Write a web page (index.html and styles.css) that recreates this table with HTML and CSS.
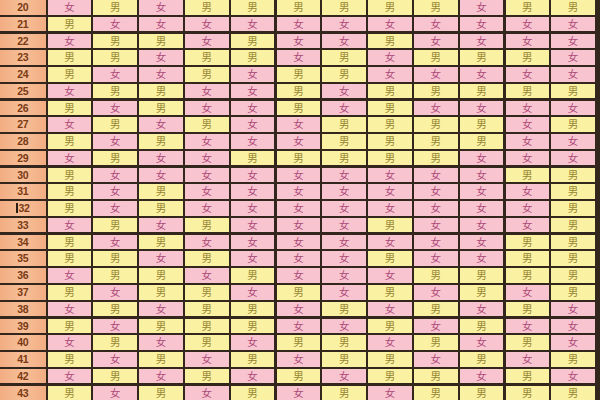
FILE: index.html
```html
<!DOCTYPE html>
<html lang="zh">
<head>
<meta charset="utf-8">
<title>表</title>
<link rel="stylesheet" href="styles.css">
</head>
<body>
<div class="sheet" id="sheet">
<div class="n">20</div><div class="g">女</div><div class="b">男</div><div class="g">女</div><div class="b">男</div><div class="b">男</div><div class="b">男</div><div class="b">男</div><div class="b">男</div><div class="b">男</div><div class="g">女</div><div class="b">男</div><div class="b">男</div>
<div class="n">21</div><div class="b">男</div><div class="g">女</div><div class="g">女</div><div class="g">女</div><div class="g">女</div><div class="g">女</div><div class="g">女</div><div class="g">女</div><div class="g">女</div><div class="g">女</div><div class="g">女</div><div class="g">女</div>
<div class="n">22</div><div class="g">女</div><div class="b">男</div><div class="b">男</div><div class="g">女</div><div class="b">男</div><div class="g">女</div><div class="g">女</div><div class="b">男</div><div class="g">女</div><div class="g">女</div><div class="g">女</div><div class="g">女</div>
<div class="n">23</div><div class="b">男</div><div class="b">男</div><div class="g">女</div><div class="b">男</div><div class="b">男</div><div class="g">女</div><div class="b">男</div><div class="g">女</div><div class="b">男</div><div class="b">男</div><div class="b">男</div><div class="g">女</div>
<div class="n">24</div><div class="b">男</div><div class="g">女</div><div class="g">女</div><div class="b">男</div><div class="g">女</div><div class="b">男</div><div class="b">男</div><div class="g">女</div><div class="g">女</div><div class="g">女</div><div class="g">女</div><div class="g">女</div>
<div class="n">25</div><div class="g">女</div><div class="b">男</div><div class="b">男</div><div class="g">女</div><div class="g">女</div><div class="b">男</div><div class="g">女</div><div class="b">男</div><div class="b">男</div><div class="b">男</div><div class="b">男</div><div class="b">男</div>
<div class="n">26</div><div class="b">男</div><div class="g">女</div><div class="b">男</div><div class="g">女</div><div class="g">女</div><div class="b">男</div><div class="g">女</div><div class="b">男</div><div class="g">女</div><div class="g">女</div><div class="g">女</div><div class="g">女</div>
<div class="n">27</div><div class="g">女</div><div class="b">男</div><div class="g">女</div><div class="b">男</div><div class="g">女</div><div class="g">女</div><div class="b">男</div><div class="b">男</div><div class="b">男</div><div class="b">男</div><div class="g">女</div><div class="b">男</div>
<div class="n">28</div><div class="b">男</div><div class="g">女</div><div class="b">男</div><div class="g">女</div><div class="g">女</div><div class="g">女</div><div class="b">男</div><div class="b">男</div><div class="b">男</div><div class="b">男</div><div class="g">女</div><div class="g">女</div>
<div class="n">29</div><div class="g">女</div><div class="b">男</div><div class="g">女</div><div class="g">女</div><div class="b">男</div><div class="b">男</div><div class="b">男</div><div class="b">男</div><div class="b">男</div><div class="g">女</div><div class="g">女</div><div class="g">女</div>
<div class="n">30</div><div class="b">男</div><div class="g">女</div><div class="g">女</div><div class="g">女</div><div class="g">女</div><div class="g">女</div><div class="g">女</div><div class="g">女</div><div class="g">女</div><div class="g">女</div><div class="b">男</div><div class="b">男</div>
<div class="n">31</div><div class="b">男</div><div class="g">女</div><div class="b">男</div><div class="g">女</div><div class="g">女</div><div class="g">女</div><div class="g">女</div><div class="g">女</div><div class="g">女</div><div class="g">女</div><div class="g">女</div><div class="b">男</div>
<div class="n"><span class="caret"></span>32</div><div class="b">男</div><div class="g">女</div><div class="b">男</div><div class="g">女</div><div class="g">女</div><div class="g">女</div><div class="g">女</div><div class="g">女</div><div class="g">女</div><div class="g">女</div><div class="g">女</div><div class="b">男</div>
<div class="n">33</div><div class="g">女</div><div class="b">男</div><div class="g">女</div><div class="b">男</div><div class="g">女</div><div class="g">女</div><div class="g">女</div><div class="b">男</div><div class="g">女</div><div class="g">女</div><div class="g">女</div><div class="b">男</div>
<div class="n">34</div><div class="b">男</div><div class="g">女</div><div class="b">男</div><div class="g">女</div><div class="g">女</div><div class="g">女</div><div class="g">女</div><div class="g">女</div><div class="g">女</div><div class="g">女</div><div class="b">男</div><div class="b">男</div>
<div class="n">35</div><div class="b">男</div><div class="b">男</div><div class="g">女</div><div class="b">男</div><div class="g">女</div><div class="g">女</div><div class="g">女</div><div class="b">男</div><div class="g">女</div><div class="g">女</div><div class="b">男</div><div class="b">男</div>
<div class="n">36</div><div class="g">女</div><div class="b">男</div><div class="b">男</div><div class="g">女</div><div class="b">男</div><div class="g">女</div><div class="g">女</div><div class="g">女</div><div class="b">男</div><div class="b">男</div><div class="b">男</div><div class="b">男</div>
<div class="n">37</div><div class="b">男</div><div class="g">女</div><div class="b">男</div><div class="b">男</div><div class="g">女</div><div class="b">男</div><div class="g">女</div><div class="b">男</div><div class="g">女</div><div class="b">男</div><div class="g">女</div><div class="b">男</div>
<div class="n">38</div><div class="g">女</div><div class="b">男</div><div class="g">女</div><div class="b">男</div><div class="b">男</div><div class="g">女</div><div class="b">男</div><div class="g">女</div><div class="b">男</div><div class="g">女</div><div class="b">男</div><div class="g">女</div>
<div class="n">39</div><div class="b">男</div><div class="g">女</div><div class="b">男</div><div class="b">男</div><div class="b">男</div><div class="g">女</div><div class="g">女</div><div class="b">男</div><div class="g">女</div><div class="b">男</div><div class="g">女</div><div class="g">女</div>
<div class="n">40</div><div class="g">女</div><div class="b">男</div><div class="g">女</div><div class="b">男</div><div class="g">女</div><div class="b">男</div><div class="b">男</div><div class="g">女</div><div class="b">男</div><div class="g">女</div><div class="b">男</div><div class="g">女</div>
<div class="n">41</div><div class="b">男</div><div class="g">女</div><div class="b">男</div><div class="g">女</div><div class="b">男</div><div class="g">女</div><div class="b">男</div><div class="b">男</div><div class="g">女</div><div class="b">男</div><div class="g">女</div><div class="b">男</div>
<div class="n">42</div><div class="g">女</div><div class="b">男</div><div class="g">女</div><div class="b">男</div><div class="g">女</div><div class="b">男</div><div class="g">女</div><div class="b">男</div><div class="b">男</div><div class="g">女</div><div class="b">男</div><div class="g">女</div>
<div class="n">43</div><div class="b">男</div><div class="g">女</div><div class="b">男</div><div class="g">女</div><div class="b">男</div><div class="g">女</div><div class="b">男</div><div class="g">女</div><div class="b">男</div><div class="b">男</div><div class="b">男</div><div class="b">男</div>
</div>
</body>
</html>
```
FILE: styles.css
```css
html, body {
  margin: 0;
  padding: 0;
  width: 600px;
  height: 400px;
  overflow: hidden;
  background: #33261c;
}

.sheet {
  width: 600px;
  height: 400px;
  display: grid;
  grid-template-columns: 45.5px repeat(12, 43.6px);
  grid-auto-rows: 14.5px;
  column-gap: 2.2px;
  row-gap: 2.27px;
  background: #33261c;
  overflow: hidden;
  font-family: "Noto Sans CJK SC", "Noto Sans", sans-serif;
}

.sheet > div {
  display: flex;
  align-items: center;
  justify-content: center;
  font-size: 10.5px;
  line-height: 1;
}

.sheet > .n {
  background: linear-gradient(90deg, #f2ad82 0%, #f7bf98 50%, #f2ad82 100%);
  color: #7a3a14;
  font-family: "Liberation Sans", Arial, sans-serif;
  font-weight: bold;
  font-size: 10.5px;
  letter-spacing: -0.3px;
}

.g {
  background: #f8c4d0;
  color: #ad4a78;
}

.b {
  background: #fbf1a2;
  color: #978734;
}

.caret {
  display: inline-block;
  width: 2px;
  height: 10px;
  background: #2a1e16;
  margin-right: 0.5px;
}
```
